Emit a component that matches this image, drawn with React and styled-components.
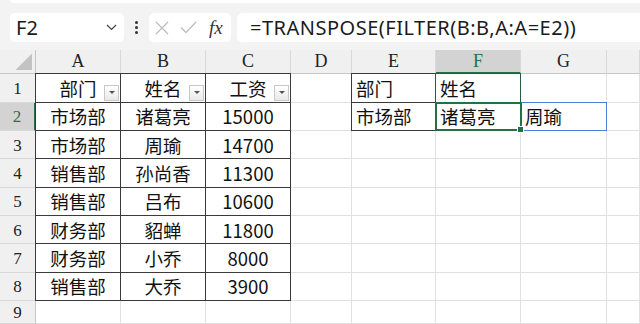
import React from "react";
import styled, { createGlobalStyle, css } from "styled-components";

const GlobalStyle = createGlobalStyle`
  html, body { margin: 0; padding: 0; }
  body {
    font-family: "Noto Sans", "Noto Sans CJK SC", sans-serif;
    background: #f3f3f3;
  }
`;

const Page = styled.div`
  width: 640px;
  height: 324px;
  overflow: hidden;
  display: flex;
  flex-direction: column;
  background: #f3f3f3;
`;

const RibbonEdge = styled.div`
  height: 4px;
  margin-left: 10px;
  background: #fff;
  border-bottom-left-radius: 6px;
`;

const Toolbar = styled.div`
  display: flex;
  height: 34px;
  margin-top: 10px;
  padding-left: 10px;
`;

const NameBox = styled.div`
  width: 114px;
  box-sizing: border-box;
  background: #fff;
  border-radius: 5px;
  display: flex;
  align-items: center;
  justify-content: space-between;
  padding: 0 7px 0 6px;
  font-size: 20px;
  color: #1b1b1b;
`;

const Grip = styled.div`
  width: 25px;
  display: flex;
  flex-direction: column;
  align-items: center;
  justify-content: center;
  gap: 2px;
  span {
    width: 3px;
    height: 3px;
    border-radius: 50%;
    background: #333;
  }
`;

const FxBox = styled.div`
  width: 82px;
  background: #fff;
  border-radius: 5px;
  display: flex;
  align-items: center;
  padding-left: 6px;
  box-sizing: border-box;
  gap: 11px;
`;

const FxLabel = styled.span`
  font-family: "Liberation Serif", serif;
  font-style: italic;
  font-size: 19px;
  color: #333;
  margin-left: 1px;
`;

const FormulaBox = styled.div`
  flex: 1;
  margin-left: 6px;
  margin-right: -10px;
  background: #fff;
  border-radius: 5px;
  display: flex;
  align-items: center;
  padding-left: 13px;
  font-size: 20px;
  letter-spacing: 0.5px;
  color: #1b1b1b;
  white-space: nowrap;
`;

const Sheet = styled.div`
  margin-top: 8px;
  display: grid;
  grid-template-columns: 36px 85px 85px 85px 61px 84px 85px 86px 1fr;
  grid-template-rows: 24px repeat(8, 28.33px) 1fr;
  flex: 1;
  background: #fff;
`;

const Corner = styled.div`
  background: #f0f0f0;
  border-right: 1px solid #c6c6c6;
  border-bottom: 1px solid #c6c6c6;
  display: flex;
  align-items: flex-end;
  justify-content: flex-end;
  padding: 0 3px 3px 0;
  box-sizing: border-box;
`;

const CornerMark = styled.div`
  width: 17px;
  height: 17px;
  background: #c3c3c3;
  clip-path: polygon(100% 0, 100% 100%, 0 100%);
`;

const ColHead = styled.div`
  box-sizing: border-box;
  background: ${({ $active }) => ($active ? "#d3d3d3" : "#f0f0f0")};
  color: ${({ $active }) => ($active ? "#217346" : "#222")};
  border-right: 1px solid #d8d8d8;
  border-bottom: ${({ $active }) => ($active ? "2px solid #217346" : "1px solid #c6c6c6")};
  display: flex;
  align-items: center;
  justify-content: center;
  font-family: "Liberation Serif", serif;
  font-size: 18px;
`;

const RowHead = styled.div`
  box-sizing: border-box;
  background: ${({ $active }) => ($active ? "#d3d3d3" : "#f0f0f0")};
  color: ${({ $active }) => ($active ? "#217346" : "#222")};
  border-right: ${({ $active }) => ($active ? "2px solid #217346" : "1px solid #c6c6c6")};
  border-bottom: 1px solid #d8d8d8;
  display: flex;
  align-items: center;
  justify-content: center;
  font-family: "Liberation Serif", serif;
  font-size: 17px;
  padding-top: 2px;
`;

const Cell = styled.div`
  position: relative;
  box-sizing: border-box;
  border-right: 1px solid #e0e0e0;
  border-bottom: 1px solid #e0e0e0;
  display: flex;
  align-items: center;
  justify-content: ${({ $left }) => ($left ? "flex-start" : "center")};
  padding-left: ${({ $left }) => ($left ? "4px" : "0")};
  font-family: "Noto Sans CJK SC", "Noto Sans", sans-serif;
  font-size: 18.5px;
  color: #111;
  white-space: nowrap;

  ${({ $box }) =>
    $box &&
    css`
      &::after {
        content: "";
        position: absolute;
        top: -1px;
        left: -1px;
        right: -1px;
        bottom: -1px;
        border: 1px solid ${$box};
        pointer-events: none;
      }
    `}

  ${({ $spill }) =>
    $spill &&
    css`
      &::after {
        content: "";
        position: absolute;
        top: -1px;
        left: -1px;
        right: -1px;
        bottom: -1px;
        border: 1px solid #4a7fd8;
        border-left: none;
      }
    `}

  ${({ $selected }) =>
    $selected &&
    css`
      z-index: 2;
      &::after {
        content: "";
        position: absolute;
        top: -1px;
        left: -1px;
        right: -2px;
        bottom: -1px;
        border: 2px solid #217346;
      }
      &::before {
        content: "";
        position: absolute;
        right: -4px;
        bottom: -3px;
        width: 5px;
        height: 5px;
        background: #217346;
        border: 1px solid #fff;
        z-index: 3;
      }
    `}
`;

const FilterButton = styled.div`
  position: absolute;
  right: 1px;
  bottom: 1px;
  width: 15px;
  height: 16px;
  box-sizing: border-box;
  border: 1px solid #c8c8c8;
  background: linear-gradient(#ffffff, #e9e9e9);
  display: flex;
  align-items: center;
  justify-content: center;
  &::after {
    content: "";
    border-left: 3px solid transparent;
    border-right: 3px solid transparent;
    border-top: 3px solid #555;
  }
`;

const columns = ["A", "B", "C", "D", "E", "F", "G", ""];

const table = [
  ["部门", "姓名", "工资"],
  ["市场部", "诸葛亮", "15000"],
  ["市场部", "周瑜", "14700"],
  ["销售部", "孙尚香", "11300"],
  ["销售部", "吕布", "10600"],
  ["财务部", "貂蝉", "11800"],
  ["财务部", "小乔", "8000"],
  ["销售部", "大乔", "3900"],
];

const DARK = "#3a3a3a";

const Chevron = () => (
  <svg width="11" height="7" viewBox="0 0 11 7">
    <polyline points="1,1 5.5,5.5 10,1" fill="none" stroke="#444" strokeWidth="1.2" />
  </svg>
);

const CancelIcon = () => (
  <svg width="14" height="14" viewBox="0 0 14 14">
    <path d="M1 1 L13 13 M13 1 L1 13" stroke="#bdbdbd" strokeWidth="1.3" fill="none" />
  </svg>
);

const EnterIcon = () => (
  <svg width="17" height="13" viewBox="0 0 17 13">
    <polyline points="1,6.5 6,11.5 16,1" fill="none" stroke="#bdbdbd" strokeWidth="1.3" />
  </svg>
);

function renderRow(r) {
  const rowNo = r + 1;
  const cells = [];
  cells.push(
    <RowHead key="h" $active={rowNo === 2}>
      {rowNo}
    </RowHead>
  );
  for (let c = 0; c < 8; c++) {
    const key = `${r}-${c}`;
    if (c < 3 && r < 8) {
      cells.push(
        <Cell key={key} $box={DARK}>
          {table[r][c]}
          {r === 0 && <FilterButton />}
        </Cell>
      );
    } else if (c === 4 && r < 2) {
      cells.push(
        <Cell key={key} $left $box={DARK}>
          {table[r][0]}
        </Cell>
      );
    } else if (c === 5 && r === 0) {
      cells.push(
        <Cell key={key} $left $box="#285c3e">
          {table[0][1]}
        </Cell>
      );
    } else if (c === 5 && r === 1) {
      cells.push(
        <Cell key={key} $left $selected>
          {table[1][1]}
        </Cell>
      );
    } else if (c === 6 && r === 1) {
      cells.push(
        <Cell key={key} $left $spill>
          {table[2][1]}
        </Cell>
      );
    } else {
      cells.push(<Cell key={key} />);
    }
  }
  return cells;
}

export default function App() {
  return (
    <Page>
      <GlobalStyle />
      <RibbonEdge />
      <Toolbar>
        <NameBox>
          F2
          <Chevron />
        </NameBox>
        <Grip>
          <span />
          <span />
          <span />
        </Grip>
        <FxBox>
          <CancelIcon />
          <EnterIcon />
          <FxLabel>fx</FxLabel>
        </FxBox>
        <FormulaBox>=TRANSPOSE(FILTER(B:B,A:A=E2))</FormulaBox>
      </Toolbar>
      <Sheet>
        <Corner>
          <CornerMark />
        </Corner>
        {columns.map((col, i) => (
          <ColHead key={i} $active={col === "F"}>
            {col}
          </ColHead>
        ))}
        {Array.from({ length: 9 }, (_, r) => renderRow(r))}
      </Sheet>
    </Page>
  );
}
